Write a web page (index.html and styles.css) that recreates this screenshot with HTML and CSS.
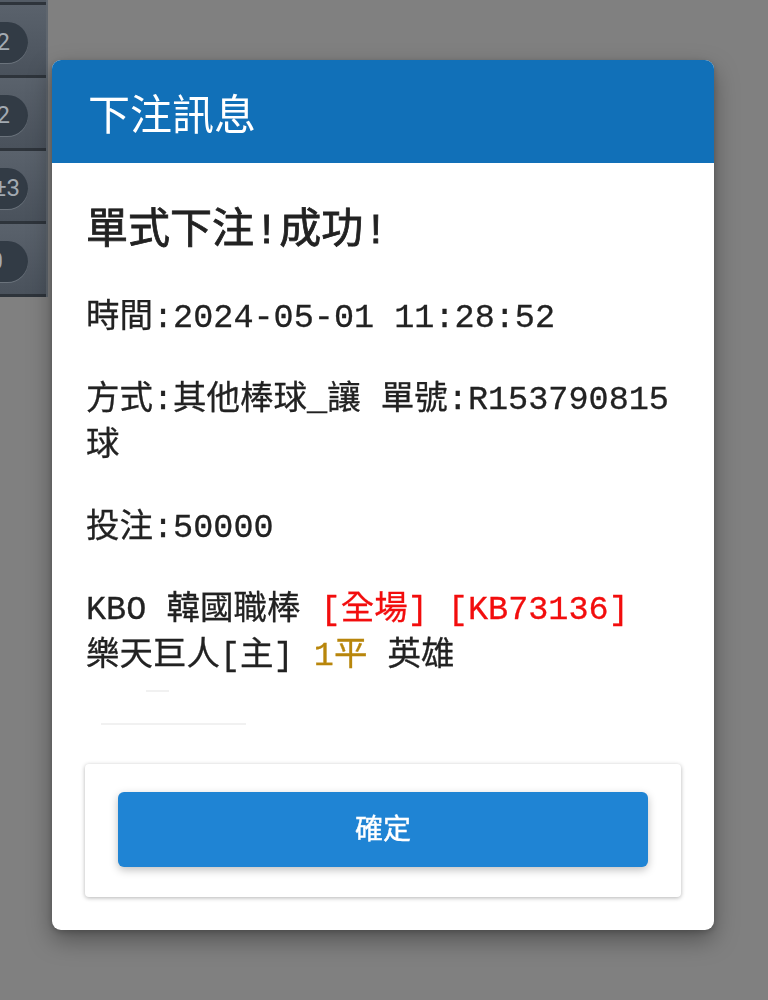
FILE: index.html
```html
<!DOCTYPE html>
<html lang="zh-Hant">
<head>
<meta charset="utf-8">
<title>下注訊息</title>
<link rel="stylesheet" href="styles.css">
</head>
<body>
<div class="page">
  <aside class="strip">
    <div class="strip-cap"></div>
    <div class="strip-row"><span class="pill">2</span></div>
    <div class="strip-row"><span class="pill">2</span></div>
    <div class="strip-row"><span class="pill pill-wide">±3</span></div>
    <div class="strip-row"><span class="pill pill-cut">0</span></div>
  </aside>
</div>
<div class="overlay">
  <div class="modal">
    <header class="modal-head"><h2 class="modal-title">下注訊息</h2></header>
    <div class="modal-body">
      <h3 class="result">單式下注!成功!</h3>
      <p class="line">時間:2024-05-01 11:28:52</p>
      <p class="line">方式:其他棒球_讓 單號:R153790815球</p>
      <p class="line">投注:50000</p>
      <p class="line">KBO 韓國職棒 <span class="red">[全場] [KB73136]</span><br>樂天巨人[主] <span class="gold">1平</span> 英雄</p>
      <div class="ghost ghost-a"></div>
      <div class="ghost ghost-b"></div>
    </div>
    <div class="modal-foot">
      <button class="btn" type="button">確定</button>
    </div>
  </div>
</div>
</body>
</html>
```
FILE: styles.css
```css
html, body {
  margin: 0;
  padding: 0;
}
body {
  background: #808080;
  font-family: "Noto Sans CJK TC", "Noto Sans", sans-serif;
  height: 1000px;
  overflow: hidden;
}
.page {
  height: 1000px;
}
.strip {
  width: 48px;
  border-right: 2px solid #5f666e;
  box-sizing: border-box;
}
.strip-cap {
  height: 2px;
  background: #535b65;
  border-bottom: 3px solid #2e343b;
}
.strip-row {
  height: 73px;
  box-sizing: border-box;
  padding-top: 5px;
  border-bottom: 3px solid #2e343b;
  background: linear-gradient(180deg, #5a626c 0%, #4a525c 100%);
  display: flex;
  align-items: center;
  overflow: hidden;
}
.pill {
  display: block;
  margin-left: -24px;
  width: 52px;
  height: 41px;
  border-radius: 21px;
  background: #323b45;
  box-shadow: 0 1px 0 #6b737c;
  color: #a3aab2;
  font: 24px/41px Roboto, "Noto Sans", sans-serif;
  text-align: right;
  padding-right: 18px;
  box-sizing: border-box;
  white-space: nowrap;
}
.pill-wide {
  padding-right: 8px;
}
.pill-cut {
  padding-right: 25px;
}
.overlay {
  position: fixed;
  top: 0;
  left: 0;
  right: 0;
  bottom: 0;
  padding: 60px 0 0 52px;
  box-sizing: border-box;
}
.modal {
  width: 662px;
  background: #fff;
  border-radius: 9px;
  overflow: hidden;
  box-shadow: 0 10px 24px rgba(0, 0, 0, 0.35), 0 2px 6px rgba(0, 0, 0, 0.2);
}
.modal-head {
  height: 103px;
  background: #1170b8;
  display: flex;
  align-items: center;
  padding-left: 36px;
}
.modal-title {
  margin: 0;
  font-size: 42px;
  font-weight: 400;
  line-height: 1;
  color: #fff;
}
.modal-body {
  padding: 42px 34px 0;
  font-family: "Liberation Mono", "Noto Sans CJK TC", monospace;
  color: #222;
}
.result {
  margin: 0 0 36px;
  font-size: 42px;
  line-height: 54px;
  font-weight: 400;
  -webkit-text-stroke: 0.8px #222;
}
.line {
  margin: 0 0 36px;
  font-size: 33.5px;
  line-height: 46px;
  -webkit-text-stroke: 0.3px currentColor;
}
.line:last-of-type {
  margin-bottom: 0;
}
.red {
  color: #f20d0d;
}
.gold {
  color: #b8860b;
}
.ghost {
  height: 2px;
  background: #f1f1f1;
}
.ghost-a {
  margin: 11px 0 0 60px;
  width: 23px;
}
.ghost-b {
  margin: 31px 0 0 15px;
  width: 145px;
}
.modal-foot {
  margin: 39px 33px 33px;
  padding: 28px 33px 30px;
  background: #fff;
  border-radius: 4px;
  box-shadow: 0 1px 4px rgba(0, 0, 0, 0.3);
}
.btn {
  display: block;
  width: 100%;
  height: 75px;
  padding: 0 0 5px;
  border: 0;
  border-radius: 6px;
  background: #1f84d4;
  color: #fff;
  font: 400 28px "Noto Sans CJK TC", sans-serif;
  -webkit-text-stroke: 0.4px #fff;
  box-shadow: 0 3px 8px rgba(0, 0, 0, 0.25);
  cursor: pointer;
}
```
